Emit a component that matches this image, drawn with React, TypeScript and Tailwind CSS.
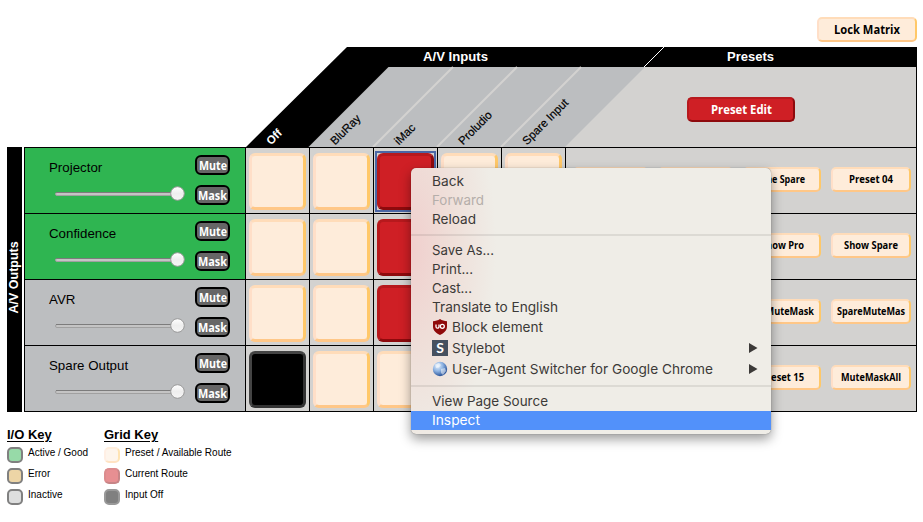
const beveled =
  "border-2 border-t-[#ffdcb9] border-r-[#ffc869] border-b-[#ffc787] border-l-[#ffdfc8] bg-[#feecda] text-black";
const beveledRed =
  "border-2 border-t-[#b7191d] border-r-[#8e0a0d] border-b-[#8e0a0d] border-l-[#b7191d] bg-[#cf1f25] text-white";

type CellState = "free" | "on" | "off";

type Output = {
  name: string;
  active: boolean;
  cells: CellState[];
  presets: string[];
};

const outputs: Output[] = [
  {
    name: "Projector",
    active: true,
    cells: ["free", "free", "on", "free", "free"],
    presets: ["", "", "One Spare", "Preset 04"],
  },
  {
    name: "Confidence",
    active: true,
    cells: ["free", "free", "on", "free", "free"],
    presets: ["", "", "Show Pro", "Show Spare"],
  },
  {
    name: "AVR",
    active: false,
    cells: ["free", "free", "on", "free", "free"],
    presets: ["", "", "ProMuteMask", "SpareMuteMas"],
  },
  {
    name: "Spare Output",
    active: false,
    cells: ["off", "free", "free", "free", "free"],
    presets: ["", "", "Preset 15", "MuteMaskAll"],
  },
];

const inputs = ["Off", "BluRay", "iMac", "Proludio", "Spare Input"];

const presetWidths = ["w-[75px]", "w-[75px]", "w-[78px]", "w-[80px]"];

const captionWidths: Record<string, number> = {
  "One Spare": 46,
  "Preset 04": 44,
  "Show Pro": 43,
  "Show Spare": 54,
  ProMuteMask: 64,
  SpareMuteMas: 68,
  "Preset 15": 43,
  MuteMaskAll: 60,
};

export default function App() {
  return (
    <div className="relative h-[522px] w-[923px] overflow-hidden bg-white font-['Liberation_Sans',Arial,sans-serif] text-black">
      <div className="flex h-[47px] justify-end pt-[17px] pr-[6px]">
        <button className={`${beveled} h-[25px] w-[100px] rounded-[5px]`}>
          <Label text="Lock Matrix" width={66} size={11.5} />
        </button>
      </div>

      <MatrixHeader />

      <div className="flex h-[265px] pl-[7px]">
        <div className="mr-[2px] flex w-[15px] items-center justify-center bg-black pb-[5px] text-[12.5px] font-bold text-white">
          <span className="-rotate-90 whitespace-nowrap">A/V Outputs</span>
        </div>
        <div className="w-[893px] border-t border-l border-black">
          {outputs.map((output, i) => (
            <OutputRow key={output.name} output={output} focused={i === 0} />
          ))}
        </div>
      </div>

      <Legend />
      <ContextMenu />
    </div>
  );
}

/* Text pinned to a fixed advance so button captions keep their spacing. */
function Label({ text, width, size, baseline = 13 }: { text: string; width: number; size: number; baseline?: number }) {
  return (
    <svg width={width} height="17" className="mx-auto block overflow-visible" fill="currentColor">
      <text
        x="0"
        y={baseline}
        textLength={width}
        lengthAdjust="spacingAndGlyphs"
        fontSize={size}
        fontWeight="700"
        fontFamily="'Open Sans', sans-serif"
      >
        {text}
      </text>
    </svg>
  );
}

function MatrixHeader() {
  return (
    <svg width="923" height="100" viewBox="0 47 923 100" className="block" fontFamily="'Liberation Sans', Arial, sans-serif">
      <rect x="560" y="67" width="356" height="80" fill="#d3d2d0" />
      <polygon points="388,67 645,67 565,147 308,147" fill="#bcbec0" />
      <polygon points="347,47 917,47 917,67 388.500,67 308.500,147 246,147" fill="#000" />
      <rect x="916" y="67" width="1" height="80" fill="#000" />
      <path d="M453 67l-80 80M517 67l-80 80M581 67l-80 80" stroke="#d3d2d0" strokeWidth="2" />
      <path d="M644 67l20-20" stroke="#fff" />
      <text x="423" y="61" fontSize="13" fontWeight="700" fill="#fff" textLength="65" lengthAdjust="spacingAndGlyphs">
        A/V Inputs
      </text>
      <text x="727" y="61" fontSize="13" fontWeight="700" fill="#fff" textLength="47" lengthAdjust="spacingAndGlyphs">
        Presets
      </text>
      {inputs.map((name, i) => (
        <text
          key={name}
          transform={`translate(${271 + i * 64} 145.500) rotate(-45)`}
          fontSize="11.500"
          fontWeight={i === 0 ? 700 : 400}
          fill={i === 0 ? "#fff" : "#000"}
          stroke={i === 0 ? "none" : "#000"}
          strokeWidth=".2"
        >
          {name}
        </text>
      ))}
      <foreignObject x="687" y="97" width="109" height="26">
        <button className={`${beveledRed} block h-[25px] w-[108px] rounded-[5px]`}>
          <Label text="Preset Edit" width={61} size={11.5} />
        </button>
      </foreignObject>
    </svg>
  );
}

function OutputRow({ output, focused }: { output: Output; focused: boolean }) {
  return (
    <div className="flex h-[66px] border-b border-black">
      <div
        className={`flex w-[221px] shrink-0 border-r border-black ${output.active ? "bg-[#2fb551]" : "bg-[#bcbec0]"}`}
      >
        <div className="w-[170px] pt-[11px] pl-[24px] text-[13.3px] leading-[18px]">
          {output.name}
          <Volume />
        </div>
        <div className="flex flex-col gap-[10px] pt-[7px]">
          <SmallButton text="Mute" width={28} />
          <SmallButton text="Mask" width={29} />
        </div>
      </div>
      {output.cells.map((state, i) => (
        <GridCell key={i} state={state} focused={focused && state === "on"} />
      ))}
      <div className="flex flex-1 justify-end gap-[10px] border-r border-black bg-[#d3d2d0] pt-[19px] pr-[5px]">
        {output.presets.map((preset, i) => (
          <button key={i} className={`${beveled} ${presetWidths[i]} h-[25px] shrink-0 rounded-[5px]`}>
            {preset && <Label text={preset} width={captionWidths[preset]} size={10.5} baseline={12} />}
          </button>
        ))}
      </div>
    </div>
  );
}

function Volume() {
  return (
    <svg width="136" height="18" className="mt-[8px] ml-[5px] block">
      <rect x="1.500" y="7.500" width="124" height="3" rx="1.500" fill="#c4c4c4" stroke="#a0a0a0" />
      <path d="M2 7.500h123" stroke="#7c7c7c" />
      <circle cx="123.500" cy="8.500" r="6.800" fill="url(#knob)" stroke="#999" />
      <defs>
        <linearGradient id="knob" x2="0" y2="1">
          <stop stopColor="#fff" />
          <stop offset=".5" stopColor="#eee" />
          <stop offset="1" stopColor="#f5f5f5" />
        </linearGradient>
      </defs>
    </svg>
  );
}

function SmallButton({ text, width }: { text: string; width: number }) {
  return (
    <button className="h-[20px] w-[35px] rounded-[6px] border-2 border-black bg-[#666] text-white">
      <Label text={text} width={width} size={11.5} />
    </button>
  );
}

function GridCell({ state, focused }: { state: CellState; focused: boolean }) {
  const look =
    state === "on"
      ? "border-t-[#b7191d] border-r-[#8e0a0d] border-b-[#8e0a0d] border-l-[#b7191d] bg-[#cf1f25]"
      : state === "off"
        ? "border-t-[#444] border-r-[#333] border-b-[#333] border-l-[#444] bg-black"
        : "border-t-[#ffdcb9] border-r-[#ffc869] border-b-[#ffc787] border-l-[#ffdfc8] bg-[#feecda]";
  return (
    <div className="w-[64px] shrink-0 border-r border-black bg-[#d3d2d0] pt-[5px] pl-[3px]">
      <div className={`size-[57px] ${focused ? "outline-2 outline-[#4a66a5]" : ""}`}>
        <button className={`block size-full rounded-[6px] border-3 ${look}`} />
      </div>
    </div>
  );
}

const ioKey = [
  ["Active / Good", "border-[#808080] bg-[#97daa8]"],
  ["Error", "border-[#808080] bg-[#edd5a6]"],
  ["Inactive", "border-[#808080] bg-[#dddede]"],
];

const gridKey = [
  ["Preset / Available Route", "border-t-[#ffeedc] border-r-[#ffe4b4] border-b-[#ffe3c3] border-l-[#ffefe4] bg-[#fef5ec]"],
  ["Current Route", "border-t-[#db8c8e] border-r-[#c78587] border-b-[#c78587] border-l-[#db8c8e] bg-[#e78f92]"],
  ["Input Off", "border-[#999] bg-[#808080]"],
];

function Legend() {
  return (
    <div className="flex pt-[15px] pl-[7px]">
      <KeyColumn title="I/O Key" items={ioKey} className="w-[97px]" />
      <KeyColumn title="Grid Key" items={gridKey} className="w-[150px]" />
    </div>
  );
}

function KeyColumn({ title, items, className }: { title: string; items: string[][]; className: string }) {
  return (
    <div className={className}>
      <h2 className="text-[13px] leading-[15px] font-bold underline underline-offset-2">{title}</h2>
      <ul className="mt-[5px] flex flex-col gap-[5px]">
        {items.map(([text, swatch]) => (
          <li key={text} className="flex h-[16px] gap-[5px] whitespace-nowrap">
            <span className={`size-[16px] rounded-[5px] border-2 ${swatch}`} />
            <span className="text-[10px] leading-[11px]">{text}</span>
          </li>
        ))}
      </ul>
    </div>
  );
}

function ContextMenu() {
  return (
    <div className="absolute top-[168px] left-[411px] h-[266px] w-[360px] rounded-[5px] bg-[#efede7] bg-[radial-gradient(ellipse_85px_210px_at_0_30%,#f0cfcd,#efdfd9_50%,#efede700)] pt-[3px] font-['Inter',sans-serif] text-[#3c3a38] shadow-[0_0_1px_rgba(0,0,0,.5),0_5px_12px_rgba(0,0,0,.4)]">
      <MenuItem text="Back" width={32} />
      <MenuItem text="Forward" width={52} muted />
      <MenuItem text="Reload" width={44} />
      <Divider />
      <MenuItem text="Save As..." width={62} />
      <MenuItem text="Print..." width={41} />
      <MenuItem text="Cast..." width={40} />
      <MenuItem text="Translate to English" width={126} />
      <MenuItem text="Block element" width={91} icon={<ShieldIcon />} />
      <MenuItem text="Stylebot" width={53} icon={<StylebotIcon />} arrow />
      <MenuItem text="User-Agent Switcher for Google Chrome" width={261} icon={<GlobeIcon />} arrow />
      <Divider />
      <MenuItem text="View Page Source" width={116} />
      <MenuItem text="Inspect" width={48} selected />
    </div>
  );
}

function Divider() {
  return (
    <div className="flex h-[12px] items-center pt-px">
      <div className="h-[2px] w-full bg-black/8" />
    </div>
  );
}

type MenuItemProps = {
  text: string;
  width: number;
  muted?: boolean;
  selected?: boolean;
  arrow?: boolean;
  icon?: React.ReactNode;
};

function MenuItem({ text, width, muted, selected, arrow, icon }: MenuItemProps) {
  return (
    <div
      className={`flex items-center pl-[21px] ${icon ? "h-[21px]" : "h-[19px]"} ${
        selected ? "mt-px bg-[#5291fa] text-white" : muted ? "text-[#b5aeaa]" : ""
      }`}
    >
      {icon && <span className="mr-[4px] w-[16px]">{icon}</span>}
      <svg width={width} height="18" className="block overflow-visible" fill="currentColor">
        <text x="0" y={selected ? 13 : 14} fontSize="13.500" textLength={width} lengthAdjust="spacingAndGlyphs">
          {text}
        </text>
      </svg>
      {arrow && (
        <svg width="9" height="10" className="mr-[13px] ml-auto" fill="currentColor">
          <path d="M0 0l8.500 5L0 10z" />
        </svg>
      )}
    </div>
  );
}

function ShieldIcon() {
  return (
    <svg width="16" height="16" className="block">
      <path d="M8 0c2 1.500 4.500 2 7 2.200v5.300c0 4-3 6.500-7 8.500-4-2-7-4.500-7-8.500V2.200C3.500 2 6 1.500 8 0z" fill="#8f0a0a" />
      <path d="M4 5.500v2.200a1.500 1.500 0 0 0 3 0V5.500" fill="none" stroke="#fff" strokeWidth="1.300" />
      <circle cx="10.300" cy="7.300" r="2" fill="none" stroke="#fff" strokeWidth="1.300" />
    </svg>
  );
}

function StylebotIcon() {
  return (
    <svg width="16" height="16" className="block">
      <rect width="16" height="16" fill="#46505f" />
      <text x="8" y="13" textAnchor="middle" fontFamily="Lato, sans-serif" fontSize="14" fontWeight="700" fill="#fff">
        S
      </text>
    </svg>
  );
}

function GlobeIcon() {
  return (
    <svg width="16" height="16" className="block">
      <defs>
        <radialGradient id="globe" cx=".35" cy=".3" r=".7">
          <stop stopColor="#e4effb" />
          <stop offset=".5" stopColor="#8fb4e3" />
          <stop offset="1" stopColor="#2b559b" />
        </radialGradient>
      </defs>
      <circle cx="8" cy="8" r="7.200" fill="url(#globe)" />
      <path d="M3 3.500l4-1.500 2 2-2 2.500-3 .5zM9 8l4-1 1 3-3 4-2-2z" fill="#fff" opacity=".5" />
    </svg>
  );
}
